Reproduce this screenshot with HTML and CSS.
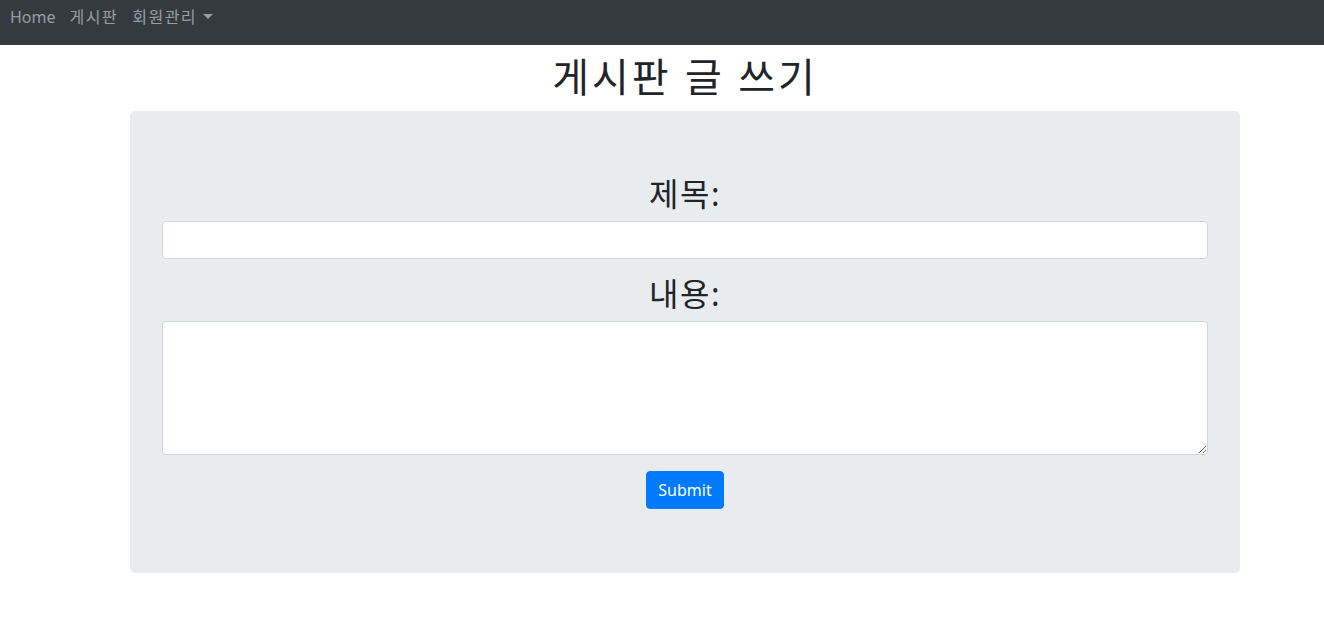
FILE: index.html
```html
<!DOCTYPE html>
<html lang="ko">
<head>
    <meta charset="UTF-8">
    <meta name="viewport" content="width=device-width, initial-scale=1.0">
    <title>게시판 글 쓰기</title>
    <link rel="stylesheet" href="styles.css">
</head>
<body>
    <nav class="navbar">
        <a class="nav-link" href="#">Home</a>
        <a class="nav-link ko" href="#">게시판</a>
        <a class="nav-link ko dropdown-toggle" href="#">회원관리</a>
    </nav>

    <div class="main">
        <h1 class="page-title">게시판 글 쓰기</h1>

        <div class="jumbotron">
            <form class="write-form" onsubmit="return false;">
                <div class="form-group">
                    <label class="form-label" for="title">제목:</label>
                    <input type="text" id="title" class="form-control">
                </div>
                <div class="form-group">
                    <label class="form-label" for="content">내용:</label>
                    <textarea id="content" class="form-control text-area"></textarea>
                </div>
                <div class="form-actions">
                    <button type="submit" class="btn-primary">Submit</button>
                </div>
            </form>
        </div>
    </div>
</body>
</html>
```

FILE: styles.css
```css
body {
    margin: 0;
    padding: 0;
    font-family: "Noto Sans", "Noto Sans CJK KR", sans-serif;
    font-size: 16px;
    line-height: 1.5;
    color: #212529;
    background: #fff;
}

.navbar {
    display: flex;
    align-items: flex-start;
    height: 45px;
    box-sizing: border-box;
    padding: 5px 3px 0;
    background-color: #343a40;
}

.nav-link {
    padding: 0 7px;
    color: rgba(255, 255, 255, 0.5);
    text-decoration: none;
    font-size: 16px;
    line-height: 24px;
}

.nav-link.ko {
    letter-spacing: 1.5px;
}

.nav-link:hover {
    color: rgba(255, 255, 255, 0.75);
}

.dropdown-toggle::after {
    content: "";
    display: inline-block;
    margin-left: 6px;
    vertical-align: 4px;
    border-top: 5px solid;
    border-right: 5px solid transparent;
    border-left: 5px solid transparent;
}

/* content sits a bit right of the page center */
.main {
    padding-left: 46px;
}

.page-title {
    margin: 8px 0 10px;
    text-align: center;
    font-size: 40px;
    font-weight: 400;
    line-height: 48px;
    letter-spacing: 3px;
}

.jumbotron {
    width: 1110px;
    margin: 0 auto;
    padding: 64px 32px;
    box-sizing: border-box;
    background-color: #e9ecef;
    border-radius: 5px;
}

.form-group {
    margin-bottom: 16px;
    text-align: center;
}

.form-label {
    display: block;
    margin-bottom: 8px;
    font-size: 32px;
    line-height: 38px;
    letter-spacing: 1.5px;
}

.form-control {
    display: block;
    width: 100%;
    height: 38px;
    box-sizing: border-box;
    padding: 6px 12px;
    font-family: inherit;
    font-size: 16px;
    color: #495057;
    background: #fff;
    border: 1px solid #ced4da;
    border-radius: 4px;
}

.text-area {
    height: 134px;
    resize: vertical;
}

.form-actions {
    text-align: center;
}

.btn-primary {
    height: 38px;
    padding: 0 11px;
    font-family: inherit;
    font-size: 16px;
    color: #fff;
    background-color: #007bff;
    border: 1px solid #007bff;
    border-radius: 4px;
    cursor: pointer;
    vertical-align: top;
}

.btn-primary:hover {
    background-color: #0069d9;
}
```
